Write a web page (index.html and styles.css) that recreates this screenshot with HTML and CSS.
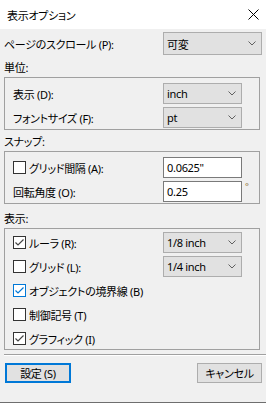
FILE: index.html
```html
<!DOCTYPE html>
<html lang="ja">
<head>
  <meta charset="UTF-8">
  <title>表示オプション</title>
  <link rel="stylesheet" href="styles.css">
</head>
<body>
  <div class="window">
    <!-- Title bar -->
    <div class="titlebar">
      <span class="title">表示オプション</span>
      <svg class="close" width="11" height="11" viewBox="0 0 11 11">
        <path d="M0.5 0.5L10.5 10.5M10.5 0.5L0.5 10.5" stroke="#000" stroke-width="1"/>
      </svg>
    </div>

    <div class="dialog">
      <div class="top-row">
        <span>ページのスクロール (P):</span>
        <div class="combo combo-wide">
          <span>可変</span>
          <svg width="8" height="5" viewBox="0 0 8 5"><path d="M0.5 0.5L4 4L7.5 0.5" fill="none" stroke="#606060"/></svg>
        </div>
      </div>

      <!-- Units -->
      <div class="section-label">単位:</div>
      <div class="group">
        <div class="field">
          <span>表示 (D):</span>
          <div class="combo">
            <span>inch</span>
            <svg width="8" height="5" viewBox="0 0 8 5"><path d="M0.5 0.5L4 4L7.5 0.5" fill="none" stroke="#606060"/></svg>
          </div>
        </div>
        <div class="field">
          <span>フォントサイズ (F):</span>
          <div class="combo">
            <span>pt</span>
            <svg width="8" height="5" viewBox="0 0 8 5"><path d="M0.5 0.5L4 4L7.5 0.5" fill="none" stroke="#606060"/></svg>
          </div>
        </div>
      </div>

      <!-- Snap -->
      <div class="section-label section-snap">スナップ:</div>
      <div class="group">
        <div class="field">
          <label class="check-label"><span class="checkbox"></span>グリッド間隔 (A):</label>
          <div class="textbox">0.0625"</div>
        </div>
        <div class="field">
          <span>回転角度 (O):</span>
          <div class="textbox">0.25</div>
          <span class="degree">°</span>
        </div>
      </div>

      <!-- Display -->
      <div class="section-label section-display">表示:</div>
      <div class="group group-display">
        <div class="field">
          <label class="check-label">
            <span class="checkbox">
              <svg width="11" height="11" viewBox="0 0 11 11"><path d="M1.5 5.5L4 8L9.5 2.5" fill="none" stroke="#444" stroke-width="1.2"/></svg>
            </span>ルーラ (R):
          </label>
          <div class="combo">
            <span>1/8 inch</span>
            <svg width="8" height="5" viewBox="0 0 8 5"><path d="M0.5 0.5L4 4L7.5 0.5" fill="none" stroke="#606060"/></svg>
          </div>
        </div>
        <div class="field">
          <label class="check-label"><span class="checkbox"></span>グリッド (L):</label>
          <div class="combo">
            <span>1/4 inch</span>
            <svg width="8" height="5" viewBox="0 0 8 5"><path d="M0.5 0.5L4 4L7.5 0.5" fill="none" stroke="#606060"/></svg>
          </div>
        </div>
        <div class="field">
          <label class="check-label">
            <span class="checkbox checkbox-focus">
              <svg width="11" height="11" viewBox="0 0 11 11"><path d="M1.5 5.5L4 8L9.5 2.5" fill="none" stroke="#0078d7" stroke-width="1.2"/></svg>
            </span>オブジェクトの境界線 (B)
          </label>
        </div>
        <div class="field">
          <label class="check-label"><span class="checkbox"></span>制御記号 (T)</label>
        </div>
        <div class="field">
          <label class="check-label">
            <span class="checkbox">
              <svg width="11" height="11" viewBox="0 0 11 11"><path d="M1.5 5.5L4 8L9.5 2.5" fill="none" stroke="#444" stroke-width="1.2"/></svg>
            </span>グラフィック (I)
          </label>
        </div>
      </div>
    </div>

    <div class="separator"></div>

    <div class="buttons">
      <button class="btn btn-default">設定 (S)</button>
      <button class="btn">キャンセル</button>
    </div>
  </div>
</body>
</html>
```

FILE: styles.css
```css
body {
  margin: 0;
  background-color: #f0f0f0;
  font-family: "Noto Sans", "Noto Sans CJK JP", sans-serif;
  font-size: 11px;
  letter-spacing: -0.3px;
  color: #000;
  font-feature-settings: "palt";
}

.window {
  width: 266px;
  height: 403px;
  box-sizing: border-box;
  border-bottom: 1px solid #6e6e6e;
  display: flex;
  flex-direction: column;
}

/* Title bar */
.titlebar {
  height: 29px;
  flex: none;
  background-color: #fff;
  display: flex;
  align-items: center;
  justify-content: space-between;
  padding: 0 7px 0 7px;
}

.title {
  font-size: 11px;
}

/* Dialog body */
.dialog {
  padding: 3px 4px 0 4px;
}

.top-row {
  display: flex;
  align-items: center;
  justify-content: space-between;
  height: 23px;
}

.section-label {
  height: 15px;
  line-height: 15px;
  margin: 5px 0 2px 0;
}

.section-snap {
  margin-top: 4px;
}

.section-display {
  margin-top: 7px;
}

.group {
  margin-right: 2px;
  border: 1px solid #a0a0a0;
  padding: 5px 0 1px 8px;
  display: flex;
  flex-direction: column;
  gap: 3px;
}

.group-display {
  padding-top: 3px;
  padding-bottom: 0;
}

.field {
  display: grid;
  grid-template-columns: 150px 79px 1fr;
  align-items: center;
  height: 21px;
}

.check-label {
  display: flex;
  align-items: center;
  white-space: nowrap;
}

.checkbox {
  width: 13px;
  height: 13px;
  box-sizing: border-box;
  border: 1px solid #333;
  background-color: #fff;
  margin-right: 3px;
  display: flex;
  align-items: center;
  justify-content: center;
}

.checkbox-focus {
  border-color: #0078d7;
}

/* Combo boxes */
.combo {
  height: 21px;
  box-sizing: border-box;
  border: 1px solid #adadad;
  background-color: #e1e1e1;
  display: flex;
  align-items: center;
  justify-content: space-between;
  padding: 0 5px 0 3px;
}

.combo-wide {
  width: 99px;
  height: 23px;
}

.textbox {
  height: 21px;
  box-sizing: border-box;
  border: 1px solid #7a7a7a;
  background-color: #fff;
  display: flex;
  align-items: center;
  padding-left: 3px;
}

.degree {
  align-self: start;
  padding-left: 3px;
  font-size: 9px;
  line-height: 12px;
  color: #8a6a30;
}

/* Footer */
.separator {
  margin: 4px 0 0 4px;
  border-top: 1px solid #a0a0a0;
  border-bottom: 1px solid #fff;
}

.buttons {
  display: flex;
  justify-content: space-between;
  padding: 0 4px 0 5px;
  margin-top: 7px;
}

.btn {
  font-family: inherit;
  font-size: 11px;
  letter-spacing: -0.3px;
  font-feature-settings: "palt";
  color: #000;
  height: 20px;
  width: 65px;
  padding: 0;
  border: 1px solid #adadad;
  background-color: #e1e1e1;
  border-radius: 0;
}

.btn-default {
  width: 66px;
  border: 2px solid #0078d7;
}
```
